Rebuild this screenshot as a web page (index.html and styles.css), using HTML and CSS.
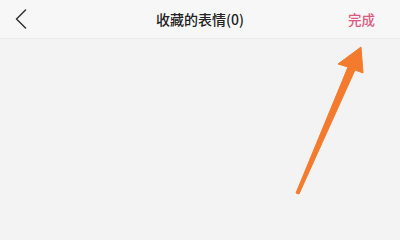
FILE: index.html
```html
<!DOCTYPE html>
<html lang="zh">
<head>
<meta charset="utf-8">
<link rel="stylesheet" href="styles.css">
</head>
<body>
<div class="page">
  <header class="bar">
    <span class="back">
      <svg width="12" height="20" viewBox="0 0 12 20"><path d="M10.5 1 L1.5 10 L10.5 19" fill="none" stroke="#333" stroke-width="1.5" stroke-linecap="round" stroke-linejoin="round"/></svg>
    </span>
    <h1 class="title">收藏的表情(0)</h1>
    <span class="done">完成</span>
  </header>
  <main class="content"></main>
  <svg class="arrow" width="400" height="240" viewBox="0 0 400 240">
    <polygon points="361,47 363,73 355,70 299,194 296,193 348,67 338,64" fill="#f47b2e" stroke="#f47b2e" stroke-width="1" stroke-linejoin="round"/>
  </svg>
</div>
</body>
</html>
```
FILE: styles.css
```css
html, body { margin: 0; padding: 0; }
body {
  width: 400px;
  height: 240px;
  overflow: hidden;
  font-family: "Noto Sans CJK SC", "Noto Sans", sans-serif;
  background: #f3f3f3;
}
.page { position: relative; width: 400px; height: 240px; display: flex; flex-direction: column; }
.bar {
  height: 38px;
  flex: none;
  display: flex;
  align-items: center;
  justify-content: space-between;
  padding: 0 25px 0 15px;
  background: #f7f7f7;
  border-bottom: 1px solid #ececec;
  position: relative;
}
.back { display: flex; width: 12px; height: 20px; }
.title {
  position: absolute;
  left: 0; right: 0;
  text-align: center;
  margin: 0;
  font-size: 14px;
  font-weight: 500;
  color: #222;
  line-height: 38px;
  pointer-events: none;
}
.done { font-size: 13.5px; font-weight: 500; color: #e05a80; }
.content { flex: 1; background: #f3f3f3; }
.arrow { position: absolute; left: 0; top: 0; }
```
